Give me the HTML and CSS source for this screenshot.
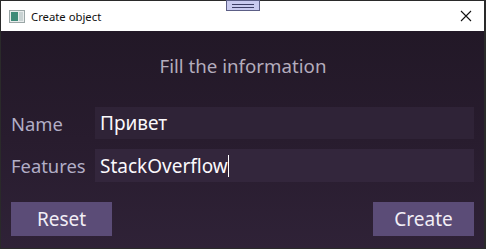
FILE: index.html
```html
<!DOCTYPE html>
<html>
<head>
<meta charset="utf-8">
<link rel="stylesheet" href="styles.css">
</head>
<body>
<div class="window">
  <div class="titlebar">
    <svg class="app-icon" width="16" height="13" viewBox="0 0 16 13">
      <rect x="0.5" y="0.5" width="15" height="12" fill="#e8ecec" stroke="#9aa6a6"/>
      <rect x="2" y="2" width="7" height="9" fill="#3f8a78"/>
      <rect x="10" y="2" width="4" height="9" fill="#c9d3d3"/>
    </svg>
    <span class="title">Create object</span>
    <svg class="close" width="12" height="12" viewBox="0 0 12 12">
      <path d="M1 1 L11 11 M11 1 L1 11" stroke="#111" stroke-width="1.1"/>
    </svg>
  </div>
  <div class="grip"><span></span><span></span></div>
  <div class="content">
    <div class="heading">Fill the information</div>
    <div class="form">
      <label class="label">Name</label>
      <div class="field">Привет</div>
      <label class="label">Features</label>
      <div class="field">StackOverflow<span class="caret"></span></div>
    </div>
    <div class="buttons">
      <button class="btn">Reset</button>
      <button class="btn">Create</button>
    </div>
  </div>
</div>
</body>
</html>
```
FILE: styles.css
```css
html, body {
  margin: 0;
  padding: 0;
  width: 486px;
  height: 249px;
  overflow: hidden;
  background: #1c1c1c;
}
.window {
  position: relative;
  width: 486px;
  height: 249px;
  box-sizing: border-box;
  border: 1px solid #2a2a2a;
  border-right-width: 2px;
  display: flex;
  flex-direction: column;
  font-family: "Noto Sans", "Open Sans", sans-serif;
}
.titlebar {
  height: 30px;
  flex: none;
  background: #ffffff;
  display: flex;
  align-items: center;
  padding: 0 12px 0 8px;
}
.app-icon {
  flex: none;
  margin-right: 6px;
}
.title {
  font-size: 11.3px;
  color: #111;
  flex: 1;
  padding-top: 1px;
}
.close {
  flex: none;
}
.grip {
  position: absolute;
  left: 225px;
  top: -1px;
  width: 34px;
  height: 11px;
  box-sizing: border-box;
  border: 1px solid #5c5f86;
  background: #c9cbf0;
  display: flex;
  flex-direction: column;
  justify-content: center;
  gap: 2px;
  padding: 0 5px;
}
.grip span {
  display: block;
  height: 1px;
  background: #3d3f66;
}
.content {
  flex: 1;
  background: linear-gradient(180deg, #221827 0%, #281c2e 50%, #2f2237 100%);
  padding: 0 10px 0 10px;
  display: flex;
  flex-direction: column;
}
.heading {
  text-align: center;
  color: #b4adbd;
  font-size: 18.7px;
  margin-top: 23px;
  height: 24px;
  line-height: 24px;
  padding-left: 1px;
}
.form {
  margin-top: 29px;
  display: grid;
  grid-template-columns: 84px 1fr;
  row-gap: 10px;
}
.label {
  color: #b2aec6;
  font-size: 18.4px;
  display: flex;
  align-items: center;
}
.field {
  height: 32px;
  background: #2f2337;
  color: #fbf9fc;
  font-size: 19px;
  display: flex;
  align-items: center;
  padding-left: 5px;
}
.form .field:nth-of-type(2) {
  height: 33px;
  background: #33263c;
}
.caret {
  display: inline-block;
  width: 1px;
  height: 22px;
  background: #fff;
}
.buttons {
  margin-top: 20px;
  display: flex;
  justify-content: space-between;
}
.btn {
  width: 101px;
  height: 34px;
  border: none;
  background: #5b4c77;
  color: #f2eef6;
  font-family: inherit;
  font-size: 19px;
  padding: 0;
}
```
